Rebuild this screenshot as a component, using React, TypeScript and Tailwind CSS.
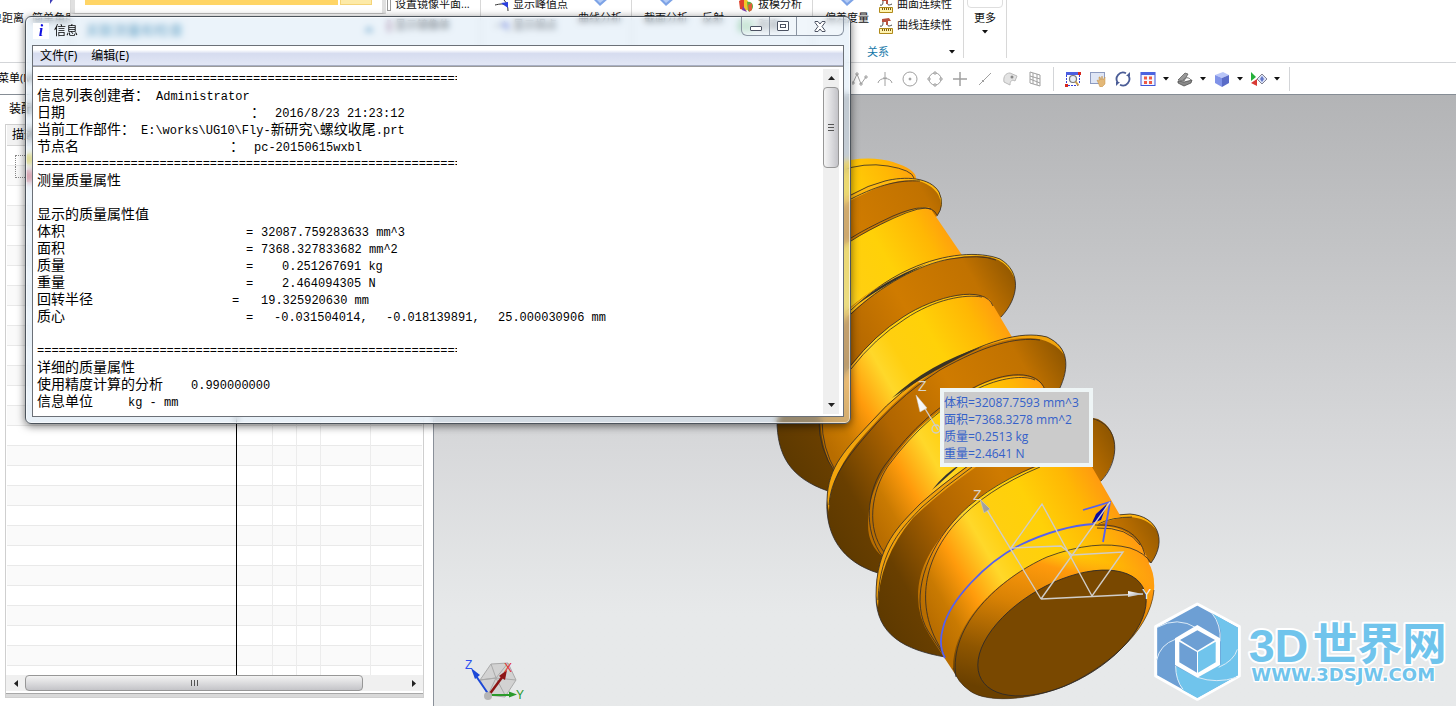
import React, { useState } from "react";

const UI_FONT = "font-['Open_Sans','Noto_Sans_CJK_SC',sans-serif]";
const MONO_FONT = "font-['Liberation_Mono','Noto_Sans_CJK_SC',monospace]";

const RULE = "=".repeat(60);

// every row is a list of [column width, text]
const listing: [string, string][][] = [
  [["w-[420px] overflow-hidden", RULE]],
  [["w-[119px]", "信息列表创建者："], ["", "Administrator"]],
  [["w-[214px]", "日期"], ["w-6", "："], ["", "2016/8/23 21:23:12"]],
  [["w-[104px]", "当前工作部件："], ["", "E:\\works\\UG10\\Fly-新研究\\螺纹收尾.prt"]],
  [["w-[193px]", "节点名"], ["w-6", "："], ["", "pc-20150615wxbl"]],
  [["w-[420px] overflow-hidden", RULE]],
  [["", "测量质量属性"]],
  [],
  [["", "显示的质量属性值"]],
  [["w-[209px]", "体积"], ["w-[15px]", "="], ["", "32087.759283633 mm^3"]],
  [["w-[209px]", "面积"], ["w-[15px]", "="], ["", "7368.327833682 mm^2"]],
  [["w-[209px]", "质量"], ["w-9", "="], ["", "0.251267691 kg"]],
  [["w-[209px]", "重量"], ["w-9", "="], ["", "2.464094305 N"]],
  [["w-[195px]", "回转半径"], ["w-[29px]", "="], ["", "19.325920630 mm"]],
  [["w-[209px]", "质心"], ["w-7", "="], ["w-28", "-0.031504014,"], ["w-28", "-0.018139891,"], ["", "25.000030906 mm"]],
  [],
  [["w-[420px] overflow-hidden", RULE]],
  [["", "详细的质量属性"]],
  [["w-[154px]", "使用精度计算的分析"], ["", "0.990000000"]],
  [["w-[91px]", "信息单位"], ["", "kg - mm"]],
];

function MixedText({ text }: { text: string }) {
  return (
    <>
      {text.split(/([^\x00-\xff]+)/).map((part, i) => (
        <span key={i} className={i % 2 ? "text-sm leading-[17px]" : ""}>{part}</span>
      ))}
    </>
  );
}

function Caret({ className = "" }: { className?: string }) {
  return (
    <svg className={className} width="6" height="4" viewBox="0 0 6 4">
      <path d="M0 0h6L3 3.5z" fill="#111" />
    </svg>
  );
}

function BlueSheet() {
  return (
    <svg width="16" height="14" viewBox="0 0 16 14">
      <path d="M1 5l8-5 7 5-8 7z" fill="#7da3e6" />
      <path d="M4 5l5-3 4 3-5 4z" fill="#b4cbf5" />
    </svg>
  );
}

function PeakIcon() {
  return (
    <svg width="14" height="16" viewBox="0 0 14 16" fill="none">
      <path d="M0 8c5-1 8-2 12 1M9 3c3 3 4 7 4 11" stroke="#333" />
      <path d="M6 6l7-1v6z" fill="#2a3fe0" />
    </svg>
  );
}

function RulerIcon() {
  return (
    <svg width="14" height="16" viewBox="0 0 14 16" fill="none">
      <path d="M1 8c3 1 3-2 3-5M8 3c0 5 1 6 5 4" stroke="#444" />
      <path d="M3 1l7-1 2 3H9v4H7V4H3z" fill="#b8503f" />
      <path d="M.5 10.500h13v5H.5z" fill="#fff3b0" stroke="#b08a1a" />
      <path d="M3.500 11v2M5.500 11v2M7.500 11v2M9.500 11v2M11.500 11v2" stroke="#7b5c10" />
    </svg>
  );
}

function DraftIcon() {
  return (
    <svg width="16" height="16" viewBox="0 0 16 16">
      <path d="M1 4l5-3v12l-4-1z" fill="#e0402a" />
      <path d="M6 1l4 3v9l-4 1z" fill="#f2c62b" />
      <path d="M9 5c3-1 6 1 6 4s-2 6-5 5z" fill="#5fb040" />
      <path d="M10 8l4-2v7l-3 2z" fill="#e0603a" />
      <path d="M5 9l4 6-5-2z" fill="#7b3fb0" />
    </svg>
  );
}

function SmallTool({ icon, label }: { icon: React.ReactNode; label: string }) {
  return (
    <button className="flex h-[21px] items-center gap-1 whitespace-nowrap text-left">
      {icon}
      <span>{label}</span>
    </button>
  );
}

function BigTool({ icon, label }: { icon: React.ReactNode; label: string }) {
  return (
    <button className="flex h-9 shrink-0 flex-col items-center whitespace-nowrap leading-5">
      <span className="flex h-3.5 items-end">{icon}</span>
      <span>{label}</span>
    </button>
  );
}

function Ribbon() {
  return (
    <header className="h-[63px] shrink-0 overflow-hidden border-b border-[#d3d5d8] bg-white">
      <div className="-mt-1.5 flex h-16 text-[11px] text-[#111]">
        <div className="flex w-[71px] shrink-0 gap-2 overflow-hidden border-r border-[#d8d8d8]">
          <div className="-ml-5"><BigTool icon={<span className="h-2 w-3" />} label="简单距离" /></div>
          <BigTool
            icon={<svg width="10" height="14" viewBox="0 0 10 14"><path d="M1 0h7L1 10z" fill="#3d3db8" /></svg>}
            label="简单角度"
          />
        </div>
        <div className="flex w-[310px] shrink-0 items-end justify-between pr-1.5 pb-[18px] pl-3.5 text-sm leading-5 text-[#1577a8]">
          <span>关联测量和检查</span>
          <svg width="12" height="18" viewBox="0 0 12 18"><path d="M1 10l5-6 5 6z" fill="#4f93bd" /></svg>
        </div>
        <div className="flex w-[100px] shrink-0 flex-col border-r border-[#d8d8d8] pl-1.5">
          <SmallTool icon={<span className="h-3 w-1 border border-[#999]" />} label="设置镜像平面..." />
          <SmallTool icon={<span className="h-3 w-1 bg-[#b58aa5]" />} label="显示镜像体" />
        </div>
        <div className="flex w-[151px] shrink-0 gap-2.5 border-r border-[#d8d8d8] pl-3.5">
          <div>
            <SmallTool icon={<PeakIcon />} label="显示峰值点" />
            <SmallTool icon={<PeakIcon />} label="显示拐点" />
          </div>
          <BigTool icon={<BlueSheet />} label="曲线分析" />
        </div>
        <div className="flex w-[181px] shrink-0 gap-3.5 border-r border-[#d8d8d8] pl-3">
          <BigTool icon={<BlueSheet />} label="截面分析" />
          <BigTool icon={<span className="h-3.5 w-4" />} label="反射" />
          <div>
            <SmallTool icon={<DraftIcon />} label="拔模分析" />
            <SmallTool icon={<span className="h-3 w-4 bg-[#a5d8a8]" />} label="距离" />
          </div>
        </div>
        <div className="w-[151px] shrink-0 border-r border-[#d8d8d8] pl-3">
          <div className="flex h-12 gap-2.5">
            <BigTool icon={<BlueSheet />} label="偏差度量" />
            <div>
              <SmallTool icon={<RulerIcon />} label="曲面连续性" />
              <SmallTool icon={<RulerIcon />} label="曲线连续性" />
            </div>
          </div>
          <div className="flex h-5 items-center justify-between pr-2 pl-[42px] text-[#1577a8]">
            <span>关系</span>
            <Caret />
          </div>
        </div>
        <div className="flex w-[43px] shrink-0 flex-col items-center border-r border-[#d8d8d8]">
          <span className="h-[14px] w-9 rounded-b border border-[#dedede]" />
          <button className="flex flex-col items-center leading-5">
            更多
            <Caret className="mt-0.5" />
          </button>
        </div>
      </div>
    </header>
  );
}

const grayTools: { label: string; art: React.ReactNode }[] = [
  { label: "样条", art: <path d="M1 12L5 3l4 10 5-7M0 11h2v2H0zM4 2h2v2H4zM8 12h2v2H8zM13 5h2v2h-2z" /> },
  { label: "曲线上的点", art: <path d="M1 12c1-6 13-6 14 0M8 1v14M6 7h4" /> },
  { label: "圆心", art: <><circle cx="8" cy="8" r="7" /><circle cx="8" cy="8" r="1" fill="#999" /></> },
  { label: "象限点", art: <><circle cx="8" cy="8" r="6" /><path d="M7 1h2v2H7zM7 13h2v2H7zM1 7h2v2H1zM13 7h2v2h-2z" fill="#fff" /></> },
  { label: "交点", art: <path d="M8 1v14M1 8h14" strokeWidth="1.500" /> },
  { label: "中点", art: <path d="M2 14L14 2M5 9l2 2" /> },
  { label: "面上的点", art: <><path d="M2 11C1 5 4 2 8 2l7 3-2 5c-3-2-5 0-5 4z" fill="#e3e3e3" stroke="#bbb" /><circle cx="10" cy="6" r="1.500" fill="#888" stroke="none" /></> },
  { label: "网格点", art: <path d="M3 1l10 3v11L3 12zM3 5l10 3M3 8l10 4M6 2v11M10 3v11" /> },
];

const viewTools: { label: string; caret: boolean; art: React.ReactNode }[] = [
  {
    label: "适合窗口", caret: false, art: (
      <>
        <path d="M1 1h13v3H1z" fill="#4b5fe0" />
        <path d="M1.500 4v9M14.500 4v9M3 14.500h10" stroke="#3540d8" strokeDasharray="2 1" />
        <circle cx="8" cy="8" r="3.500" fill="#e8eef5" stroke="#777" strokeWidth="1.200" />
        <path d="M10.500 10.500l3 4" stroke="#c89a4a" strokeWidth="2" />
        <path d="M0 13h3v3H0zM13 1h3v3h-3z" fill="#d8281e" />
      </>
    ),
  },
  {
    label: "平移", caret: false, art: (
      <>
        <rect x="0.500" y="1.500" width="14" height="11" fill="#dfe6f5" stroke="#8d9bc0" />
        <path d="M7 9l2 1V6h1l1 3 1-4 1 4 2-3v7l-3 3h-2z" fill="#e3b878" stroke="#c0904a" strokeWidth="0.500" />
      </>
    ),
  },
  {
    label: "旋转", caret: false, art: (
      <>
        <path d="M3 12A6.500 6.500 0 0 1 11 2.200" stroke="#4a5c96" strokeWidth="1.800" />
        <path d="M13 4A6.500 6.500 0 0 1 5 13.800" stroke="#4a5c96" strokeWidth="1.800" />
        <path d="M11 5h4V1zM5 11H1v4z" fill="#4a5c96" />
      </>
    ),
  },
  {
    label: "布局", caret: true, art: (
      <>
        <rect x="1" y="1.500" width="14" height="13" fill="#f4f6ff" stroke="#3f55d8" />
        <path d="M1 1h14v3H1z" fill="#4b63e0" />
        <path d="M4 5.500h3v3H4zM9 5.500h3v3H9zM4 10h3v3H4zM9 10h3v3H9z" fill="#ee5a44" />
      </>
    ),
  },
  {
    label: "视图方向", caret: true, art: (
      <>
        <path d="M1 9l7-7 3 1-4 7z" fill="#999" stroke="#555" strokeWidth="0.700" />
        <path d="M1 10l6 1 8-2-1 3-7 3-6-3z" fill="#888" stroke="#444" strokeWidth="0.700" />
        <path d="M6 9c2-3 6-3 8 0" stroke="#777" />
      </>
    ),
  },
  {
    label: "渲染样式", caret: true, art: (
      <>
        <path d="M1 4l8-3 6 3-7 3z" fill="#b9c6f8" />
        <path d="M1 4l7 3v9l-7-4z" fill="#8093e8" />
        <path d="M15 4L8 7v9l7-4z" fill="#5a6cc8" />
      </>
    ),
  },
  {
    label: "显示和隐藏", caret: true, art: (
      <>
        <path d="M0 1l5 5-5 4z" fill="#25b03a" />
        <path d="M6 8v7l-6-3z" fill="#d83a34" />
        <path d="M6 8l5-5 5 5-5 5z" fill="#dbe2f8" stroke="#667" strokeWidth="0.800" />
        <path d="M9 8l2-3 2 3-2 3z" fill="#6579c8" />
      </>
    ),
  },
];

function SelectionBar() {
  return (
    <div className="flex h-8 shrink-0 items-center border-b border-[#868d95] bg-white">
      <button className="w-[847px] shrink-0 text-left text-[11px]">
        <span className="-ml-0.5">菜单(M)</span>
      </button>
      {grayTools.map((tool) => (
        <button key={tool.label} aria-label={tool.label} className="flex w-[25px] shrink-0 justify-center">
          <svg width="16" height="16" viewBox="0 0 16 16" fill="none" stroke="#a0a0a0">{tool.art}</svg>
        </button>
      ))}
      <span className="mx-1.5 h-6 w-px bg-[#d3d5d8]" />
      {viewTools.map((tool) => (
        <React.Fragment key={tool.label}>
          <button aria-label={tool.label} className="flex w-[25px] shrink-0 justify-center">
            <svg width="16" height="16" viewBox="0 0 16 16" fill="none">{tool.art}</svg>
          </button>
          {tool.caret && <button aria-label={tool.label + "选项"} className="flex w-3 shrink-0 justify-center"><Caret /></button>}
        </React.Fragment>
      ))}
      <span className="mx-1.5 h-6 w-px bg-[#d3d5d8]" />
    </div>
  );
}

function Navigator() {
  return (
    <aside className="flex w-[433px] shrink-0 flex-col bg-white pr-[9px] pb-2 pl-[5px]">
      <h2 className="h-[29px] shrink-0 pl-1 text-xs leading-7">装配导航器</h2>
      <div className="flex min-h-0 flex-1 flex-col border border-[#cfcfcf]">
        <div className="min-h-0 flex-1 overflow-hidden px-px">
          <table className="w-full table-fixed border-collapse text-xs">
            <colgroup>
              <col className="w-[229px]" />
              <col className="w-9" />
              <col className="w-6" />
              <col className="w-6" />
              <col className="w-[50px]" />
              <col />
            </colgroup>
            <thead>
              <tr className="h-5 border-b border-[#d4d4d4] bg-[#f2f2f2]">
                <th className="border-r border-black pl-[5px] text-left font-normal leading-5">描述性部件名</th>
                {[1, 2, 3, 4, 5].map((c) => <th key={c} className="border-r border-[#e9e9e9]" />)}
              </tr>
            </thead>
            <tbody>
              {Array.from({ length: 27 }, (_, r) => (
                <tr key={r} className="h-5 border-b border-[#e9e9e9] odd:bg-white even:bg-[#fafafa]">
                  <td className="border-r border-black p-0">
                    {r === 0 && (
                      <span className="flex h-[19px] items-end pl-2">
                        <span className="h-2.5 w-2.5 border-t border-l border-dotted border-[#888]" />
                        <span className="h-3 w-3 rounded-full bg-[#e5cf3a]" />
                      </span>
                    )}
                    {r === 1 && (
                      <span className="flex h-[19px] items-start pl-2">
                        <span className="h-3 w-2.5 border-b border-l border-dotted border-[#888]" />
                        <span className="mt-1 h-3 w-3 bg-[#d8727c]" />
                      </span>
                    )}
                  </td>
                  {[1, 2, 3, 4, 5].map((c) => <td key={c} className="border-r border-[#ececec] p-0 last:border-r-0" />)}
                </tr>
              ))}
            </tbody>
          </table>
        </div>
        <div className="mb-0.5 flex h-4 shrink-0 items-stretch bg-[#f0f0f0]">
          <button aria-label="向左滚动" className="flex w-[19px] items-center justify-center">
            <svg width="4" height="7" viewBox="0 0 4 7"><path d="M4 0v7L0 3.500z" fill="#222" /></svg>
          </button>
          <div className="flex-1">
            <div className="flex h-full w-[338px] items-center justify-center rounded-sm border border-[#979797] bg-linear-to-b from-[#f3f3f3] via-[#dcdcde] to-[#c4c4c8]">
              {[0, 1, 2].map((i) => <span key={i} className="mx-px h-1.5 w-px bg-[#555]" />)}
            </div>
          </div>
          <button aria-label="向右滚动" className="flex w-[19px] items-center justify-center">
            <svg width="4" height="7" viewBox="0 0 4 7"><path d="M0 0v7l4-3.500z" fill="#222" /></svg>
          </button>
        </div>
        <div className="h-1 shrink-0 border-t border-[#a8a8a8] bg-[#d9d9d9]" />
      </div>
    </aside>
  );
}

// Screw model. Back segments come first, each flange covers the segment behind it.
function Screw() {
  const edge = { fill: "none", stroke: "#2d2a2a", strokeWidth: 0.8 };
  return (
    <svg className="absolute inset-0 h-full w-full" viewBox="434 95 1022 611" preserveAspectRatio="xMinYMin slice">
      <defs>
        <linearGradient id="body" gradientUnits="userSpaceOnUse" x1="917" y1="600" x2="1110" y2="488">
          <stop offset="0" stopColor="#b86d00" />
          <stop offset="0.100" stopColor="#c97a02" />
          <stop offset="0.230" stopColor="#ff9b0c" />
          <stop offset="0.380" stopColor="#ffd82a" />
          <stop offset="0.480" stopColor="#ffcf10" />
          <stop offset="0.650" stopColor="#ffd108" />
          <stop offset="0.850" stopColor="#ffb704" />
          <stop offset="1" stopColor="#ff9612" />
        </linearGradient>
        <linearGradient id="face" gradientUnits="userSpaceOnUse" x1="884" y1="619" x2="1136" y2="473">
          <stop offset="0" stopColor="#5f3a00" />
          <stop offset="0.120" stopColor="#693f00" />
          <stop offset="0.350" stopColor="#b06500" />
          <stop offset="0.600" stopColor="#cf7b00" />
          <stop offset="0.850" stopColor="#c17200" />
          <stop offset="1" stopColor="#8d5500" />
        </linearGradient>
        <linearGradient id="rim" gradientUnits="userSpaceOnUse" x1="1068" y1="552" x2="1030" y2="700">
          <stop offset="0" stopColor="#ff9f10" stopOpacity="0" />
          <stop offset="0.120" stopColor="#ff9a0c" />
          <stop offset="0.400" stopColor="#d98204" />
          <stop offset="0.750" stopColor="#8f5600" />
          <stop offset="1" stopColor="#6a4000" />
        </linearGradient>
        <linearGradient id="cone" x1="0" y1="0" x2="1" y2="1">
          <stop offset="0" stopColor="#fff" />
          <stop offset="1" stopColor="#9a9a9a" />
        </linearGradient>
      </defs>

      {/* far end */}
      <path d="M830 164Q868 154 893 162T916 180L933 207 850 260H800z" fill="url(#body)" />
      <path d="M840 171Q864 162 888 166T914 178" {...edge} />
      {/* flange 1 */}
      <path d="M830 206Q860 188 885 181C905 176 930 177 939 192Q945 205 937 216L900 250 830 275z" fill="url(#face)" />
      <path d="M830 207Q860 188 885 181C905 176 930 177 939 192Q944 202 941 208Q942 190 922 182C900 176 876 186 830 212z" fill="#ffb80f" />
      <path d="M851 195Q868 185 885 181C905 176 930 177 939 192Q945 205 937 216M851 199C880 184 900 180 920 181" {...edge} />
      {/* segment 1 */}
      <path d="M830 253Q851 240 893 218Q922 204 930 208L962 255 910 300 830 340z" fill="url(#body)" />
      <path d="M851 238Q865 229 893 216Q930 200 937 215M851 241Q866 231 894 218Q922 205 931 209" {...edge} />

      {/* flange 2 */}
      <path d="M800 360C840 310 876 285 910 269C945 253 980 251 1000 259C1022 272 1019 298 1001 317L900 440 828 491C790 478 777 455 777 420z" fill="url(#face)" />
      <path d="M820 340C850 305 876 285 910 269C945 253 980 251 1000 259C1010 265 1014 272 1015 280Q1009 262 990 257C960 251 920 266 895 281Q860 300 820 344z" fill="#ffbf14" />
      <path d="M851 310C865 297 885 280 910 269C945 253 980 251 1000 259C1022 272 1019 298 1001 317M851 314C880 286 920 264 950 259Q980 254 996 260M777 420C777 455 790 478 828 491" {...edge} />
      <path d="M858 304Q882 281 926 264Q884 285 858 304z" fill="#33302a" />
      {/* segment 2 */}
      <path d="M820 405Q836 382 851 366Q875 335 903 317C935 296 975 288 990 300L1012 337 900 440 836 474Q819 450 820 405z" fill="url(#body)" />
      <path d="M820 410Q836 382 851 365Q875 335 903 317C935 296 985 284 993 306M851 369Q875 338 905 319C935 299 965 294 982 297M819 420Q818 448 836 474M822 420Q822 448 836 472" {...edge} />

      {/* flange 3 */}
      <path d="M827 500C828 466 846 449 872 421Q899 390 940 366C985 342 1020 330 1047 337C1069 347 1070 367 1059 390L940 540 878 573C842 562 825 535 827 500z" fill="url(#face)" />
      <path d="M827 500C828 466 846 449 872 421Q899 390 940 366C985 342 1020 330 1047 337Q1061 344 1065 356Q1053 339 1030 338C990 337 950 362 930 374Q895 399 865 434Q828 475 829 512z" fill="#f2a40c" />
      <path d="M872 421Q899 390 940 366C985 342 1020 330 1047 337C1069 347 1070 367 1059 390M878 573C842 562 825 535 827 500C828 466 846 449 872 421M829 505C831 474 852 452 876 424Q905 392 940 370C985 345 1015 337 1040 340" {...edge} />
      <path d="M892 398Q928 364 984 346Q932 370 892 398z" fill="#3a3324" />
      {/* segment 3 */}
      <path d="M868 525C868 490 885 466 907 441Q930 414 973 389C1000 374 1035 370 1044 388L1064 420 940 560 883 557Q868 545 868 525z" fill="url(#body)" />
      <path d="M883 557C862 530 867 490 885 465Q925 410 973 388C1005 371 1038 369 1045 390M884 552C866 528 871 492 888 466Q928 412 975 390C1000 377 1025 375 1035 380" {...edge} />

      {/* flange 4 */}
      <path d="M876 596C876 545 900 525 920 504Q940 486 966 467C1000 440 1060 410 1098 419C1122 431 1118 462 1101 481L1010 620 945 657C905 650 876 635 876 596z" fill="url(#face)" />
      <path d="M876 596C876 545 900 525 920 504Q940 486 970 465L976 467Q940 492 913 518Q878 560 878 608z" fill="#f0a00c" />
      <path d="M945 657C905 650 876 635 876 596C876 545 900 525 920 504Q940 486 968 466M878 600C880 548 903 527 922 507Q944 487 972 467M1090 418C1122 424 1120 462 1101 481" {...edge} />
      <path d="M932 490Q944 474 962 463Q946 478 932 490z" fill="#333" />
      {/* tail flange */}
      <path d="M1090 524Q1104 515 1130 514C1157 516 1168 540 1151 563L1140 560 1095 530z" fill="url(#face)" />
      <path d="M1090 524Q1104 515 1130 514Q1150 516 1157 531Q1147 517 1128 517Q1112 518 1096 526z" fill="#ffb30e" />
      <path d="M1093 523Q1104 515 1130 514C1157 516 1168 540 1151 563M1098 524Q1112 517 1132 517" {...edge} />
      {/* segment 4 */}
      <path d="M918 597C918 565 934 545 953 522Q975 496 1012 477Q1035 466 1060 460H1088L1121 517Q1104 518 1095 526Q1138 524 1149 563L1060 680 955 674 930 636Q918 618 918 597z" fill="url(#body)" />
      <path d="M945 657L928 631C912 605 920 560 953 522Q980 490 1036 466M943 652C915 610 922 562 955 524Q985 490 1040 467M1095 525Q1137 523 1145 555M1097 528Q1128 527 1140 545" {...edge} />

      {/* rounded rim and end face */}
      <path d="M953 668C953 620 1000 578 1047 557Q1095 539 1130 548Q1156 558 1154 590C1150 635 1100 670 1065 686C1025 702 985 702 970 691Q957 682 953 668z" fill="url(#body)" />
      <path d="M953 668C953 620 1000 578 1047 557Q1095 539 1130 548Q1156 558 1154 590C1150 635 1100 670 1065 686C1025 702 985 702 970 691Q957 682 953 668z" fill="url(#rim)" />
      <path d="M956 677C948 625 1000 578 1047 557Q1095 539 1130 548Q1145 553 1151 563" {...edge} />
      <ellipse cx="1062" cy="633" rx="93" ry="49" transform="rotate(-30 1062 633)" fill="#794800" stroke="#2d2a2a" strokeWidth="0.800" />
      <path d="M953 668Q957 682 970 691C985 702 1025 702 1065 686C1100 670 1150 635 1154 590" {...edge} strokeWidth="0.600" />

      {/* helix end curve */}
      <g fill="none" stroke="#5560f0" strokeWidth="1.800">
        <path d="M945 658Q938 645 943 628C950 600 985 563 1020 545Q1060 526 1094 524" />
        <path d="M1083 510l27-8-7 40" />
      </g>
      <path d="M1092 523l4-9 11-10-6 16z" fill="#0a0aa0" />

      {/* datum axes */}
      <g fill="none" stroke="#d0cdc8" strokeWidth="1.400">
        <path d="M1041 599L984 505M1041 599l102-5M1041 599l69-97" />
        <path d="M1011 548l31-44 50 92 31-44-51 3-11-9z" />
        <path d="M921 402l17 28" />
        <circle cx="936" cy="429" r="4" />
      </g>
      <path d="M980 499l10 10-6 4zM916 395l11 13-7 4z" fill="url(#cone)" stroke="#ccc" strokeWidth="0.500" />
      <path d="M1143 594l-15-3v6z" fill="url(#cone)" />
      <g fontFamily="Liberation Sans" fontSize="14" fill="#d8d4cc">
        <text x="973" y="500">Z</text>
        <text x="918" y="391">Z</text>
        <text x="1142" y="599" fill="#eee">Y</text>
      </g>

      {/* view triad */}
      <path d="M491 664l17-1 8 17-11 17-17-2-8-15z" fill="#d2d2d2" stroke="#aaa" />
      <path d="M480 680l16-2 20 2M491 664l5 14 12-15M496 678l9 17M480 680l16-2-8 17" fill="none" stroke="#aaa" />
      <path d="M489 695L476 676" stroke="#1c48d8" strokeWidth="2" />
      <path d="M471 668l9 7-5 4z" fill="#1c48d8" />
      <path d="M489 695l14-19" stroke="#8c1515" strokeWidth="2.500" />
      <path d="M507 670l-2 10-6-4z" fill="#8c1515" />
      <path d="M489 695h22" stroke="#2b9a2b" strokeWidth="2" />
      <path d="M517 694.500l-8-3v6z" fill="#2b9a2b" />
      <circle cx="488" cy="696" r="4" fill="#b5b5b5" />
      <g fontFamily="Liberation Sans" fontSize="12">
        <text x="465" y="669" fill="#2f50f0">Z</text>
        <text x="504" y="672" fill="#e03030">X</text>
        <text x="516" y="699" fill="#2b9a2b">Y</text>
      </g>
    </svg>
  );
}

function Watermark() {
  return (
    <svg className="absolute right-1 bottom-1" width="300" height="100" viewBox="36 36 900 300">
      <path d="M172 42l126 68v148l-126 70-125-70V110z" fill="#6d9fd4" stroke="#fff" strokeWidth="9" strokeLinejoin="round" />
      {/* light blades of the shutter */}
      <path d="M216 70l78 43v143l-122 68-45-25q-22-35-20-70l65 34 70-40v-78q6-40-26-75z" fill="#70c4ec" />
      <g fill="none" stroke="#dcebf7" strokeWidth="3">
        <path d="M52 112q60-34 118 2M216 70q28 34 24 84M292 178q-10 34-56 54M290 262q-60 20-118 0M107 228q0 42 22 70M50 210q10-46 56-62" />
      </g>
      <path d="M172 105l68 40v80l-68 38-67-38v-80z" fill="#fff" />
      <path d="M172 121l53 29-53 32-52-32z" fill="#6d9fd4" />
      <path d="M118 155l53 31v62l-53-31z" fill="#6d9fd4" />
      <path d="M227 155l-53 31v62l53-31z" fill="#70c4ec" />
      <g fill="#70c4ec" stroke="#fff" strokeLinejoin="round" paintOrder="stroke" fontWeight="700">
        <text x="326" y="217" fontSize="140" strokeWidth="12" fontFamily="Liberation Sans">3D</text>
        <text x="518" y="211" fontSize="134" strokeWidth="12" fontFamily="Noto Sans CJK SC">世界网</text>
        <text x="334" y="274" fontSize="54" strokeWidth="8" fontFamily="DejaVu Sans">WWW.3DSJW.COM</text>
      </g>
    </svg>
  );
}

function Viewport() {
  return (
    <main className="relative min-w-0 flex-1 overflow-hidden border-l border-[#8a9099] bg-linear-to-b from-[#b3b4b6] via-[#d6d7d9] via-55% to-[#e7e9ea] to-85%">
      <Screw />
      <div className="absolute top-[293px] left-[506px] border-4 border-[#eef5f6] bg-[#cbcbcb] pt-0.5 pr-2.5 pb-px text-xs leading-[17px] text-[#3561c9]">
        <p>体积=32087.7593 mm^3</p>
        <p>面积=7368.3278 mm^2</p>
        <p>质量=0.2513 kg</p>
        <p>重量=2.4641 N</p>
      </div>
      <Watermark />
    </main>
  );
}

function InfoWindow({ onClose }: { onClose: () => void }) {
  return (
    <section className="absolute top-4 left-[25px] flex h-[408px] w-[826px] flex-col rounded-md border border-[#4c545c] bg-[#d3e4f5]/45 px-1.5 pb-1.5 shadow-[0_2px_8px_rgba(0,0,0,0.55),inset_0_0_0_1px_rgba(255,255,255,0.6)] backdrop-blur-[3px]">
      <div className="flex h-7 shrink-0 items-start">
        <span className="mt-1.5 ml-px flex h-4 w-4 items-center justify-center bg-white font-['Liberation_Serif',serif] text-base leading-4 font-bold text-[#1010e0] italic">i</span>
        <h1 className="mt-1 ml-[5px] text-xs leading-5 text-black">信息</h1>
        <div className="ml-auto flex h-[19px] rounded-b-md border border-t-0 border-[#8b95a3] bg-white/25">
          <button aria-label="最小化" className="flex w-7 items-center justify-center border-r border-[#8b95a3]">
            <span className="mt-1 h-[5px] w-3 rounded-[1px] border border-[#4b5262] bg-white" />
          </button>
          <button aria-label="最大化" className="flex w-[27px] items-center justify-center border-r border-[#8b95a3]">
            <span className="flex h-2.5 w-3 items-center justify-center rounded-[1px] border border-[#4b5262] bg-white">
              <span className="h-1 w-1.5 border border-[#4b5262]" />
            </span>
          </button>
          <button aria-label="关闭" onClick={onClose} className="flex w-[46px] items-center justify-center">
            <svg width="12" height="11" viewBox="0 0 12 11">
              <path d="M1 .5h3l2 2.500L8 .5h3v1L8 5.500l3 4v1H8L6 8l-2 2.500H1v-1l3-4-3-4z" fill="#fff" stroke="#4b5262" />
            </svg>
          </button>
        </div>
      </div>
      <div className="flex min-h-0 flex-1 flex-col border border-[#6b7077] bg-white">
        <nav className="flex h-5 shrink-0 items-center gap-3.5 border-b border-[#a9b0c4] bg-linear-to-b from-white from-20% via-[#d6dcef] via-40% to-[#e2e7f5] px-[7px] text-xs text-black">
          <button>文件(F)</button>
          <button>编辑(E)</button>
        </nav>
        <div className="flex min-h-0 flex-1 border-t border-[#9a9a9a]">
          <div className={`${MONO_FONT} min-w-0 flex-1 overflow-hidden pt-1 pl-1 text-xs leading-[17px] whitespace-pre text-black`}>
            {listing.map((row, i) => (
              <div key={i} className="flex h-[17px] items-baseline">
                {row.map(([width, text], j) => (
                  <span key={j} className={`shrink-0 ${width}`}><MixedText text={text} /></span>
                ))}
              </div>
            ))}
          </div>
          <div className="my-0.5 mr-1 flex w-4 shrink-0 flex-col bg-[#efefef]">
            <button aria-label="向上滚动" className="flex h-[18px] items-center justify-center">
              <svg width="7" height="4" viewBox="0 0 7 4"><path d="M0 4h7L3.500 0z" fill="#222" /></svg>
            </button>
            <div className="flex-1">
              <div className="flex h-[81px] flex-col items-center justify-center gap-0.5 rounded-sm border border-[#979797] bg-linear-to-r from-[#f5f5f5] via-[#dddde0] to-[#c3c3c8]">
                {[0, 1, 2].map((i) => <span key={i} className="h-px w-1.5 bg-[#555]" />)}
              </div>
            </div>
            <button aria-label="向下滚动" className="flex h-[18px] items-center justify-center">
              <svg width="7" height="4" viewBox="0 0 7 4"><path d="M0 0h7L3.500 4z" fill="#222" /></svg>
            </button>
          </div>
        </div>
      </div>
    </section>
  );
}

export default function App() {
  const [infoOpen, setInfoOpen] = useState(true);

  return (
    <div className={`${UI_FONT} relative flex h-screen flex-col overflow-hidden bg-white text-black`}>
      <Ribbon />
      <SelectionBar />
      <div className="flex min-h-0 flex-1">
        <Navigator />
        <Viewport />
      </div>
      {/* gallery flyout hanging from the ribbon */}
      <div className="absolute top-0 left-[71px] flex h-3.5 w-[315px] items-start gap-0.5 border-x-4 border-b border-[#e0e0e0] border-b-[#bdbdbd] bg-white pl-2.5">
        <span className="h-[5px] w-[253px] bg-[#ffd566]" />
        <span className="h-[5px] w-8 border border-t-0 border-[#f5d478] bg-[#fdeaa8]" />
      </div>
      {infoOpen && <InfoWindow onClose={() => setInfoOpen(false)} />}
    </div>
  );
}
